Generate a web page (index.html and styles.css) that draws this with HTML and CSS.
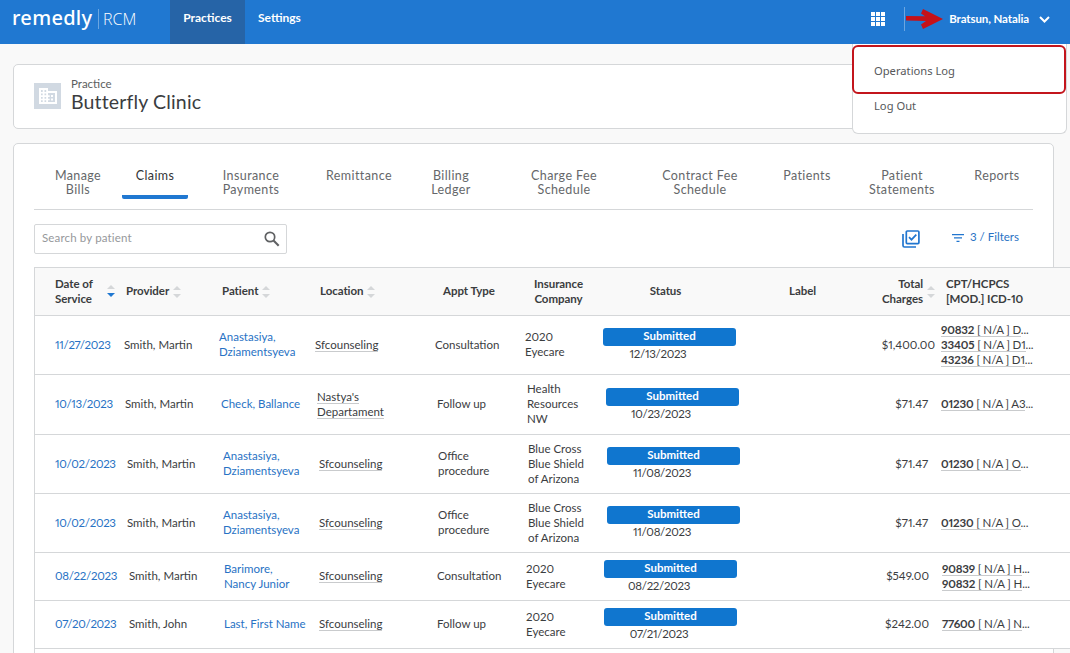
FILE: index.html
```
<!DOCTYPE html>
<html lang="en">
<head>
  <meta charset="UTF-8">
  <meta name="viewport" content="width=device-width, initial-scale=1">
  <title>Remedly RCM - Claims</title>
  <link rel="stylesheet" href="styles.css">
</head>
<body>

  <header class="topbar">
    <div class="logo"><span class="logo-name">remedly</span><span class="logo-rcm">RCM</span></div>
    <nav class="main-nav">
      <a class="nav-link active">Practices</a>
      <a class="nav-link">Settings</a>
    </nav>
    <div class="user">
      <svg class="apps" width="14" height="14" viewBox="0 0 14 14" fill="#fff">
        <path d="M0 0h4v4H0zM5 0h4v4H5zM10 0h4v4h-4zM0 5h4v4H0zM5 5h4v4H5zM10 5h4v4h-4zM0 10h4v4H0zM5 10h4v4H5zM10 10h4v4h-4z"/>
      </svg>
      <div class="divider"></div>
      <svg class="arrow" width="38" height="20" viewBox="0 0 38 20">
        <path d="M1 7 L20 7.300 L16 4.500 L18 0 L38 10 L18 20 L16 15.500 L21 12 L1 11.500 Z" fill="#c61118"/>
      </svg>
      <span class="user-name">Bratsun, Natalia</span>
      <svg class="chevron" width="11" height="7" viewBox="0 0 11 7" fill="none" stroke="#fff" stroke-width="2"><path d="M1 1l4.500 4.500L10 1"/></svg>
    </div>
    <div class="menu">
      <a class="menu-item marked">Operations Log</a>
      <a class="menu-item">Log Out</a>
    </div>
  </header>

  <section class="panel practice">
    <div class="practice-icon">
      <svg width="18" height="16" viewBox="0 0 18 16">
        <path fill="#fff" d="M0 0h9v3h9v13H0z"/>
        <path fill="#d1d9e2" d="M2 2h1.700v2H2zM5.500 2h1.700v2H5.500zM2 5.500h1.700v1.700H2zM5.500 5.500h1.700v1.700H5.500zM2 9h1.700v1.700H2zM5.500 9h1.700v1.700H5.500zM2 12.300h1.700V14H2zM5.500 12.300h1.700V14H5.500zM9 5h7v9H9v-1.700h1.700v-1.600H9V9h1.700V7.200H9z"/>
        <path fill="#fff" d="M12 7h2v2h-2zM12 10.500h2v2h-2z"/>
      </svg>
    </div>
    <div>
      <div class="practice-label">Practice</div>
      <div class="practice-name">Butterfly Clinic</div>
    </div>
  </section>

  <section class="panel main">
    <nav class="tabs">
      <a class="tab">Manage<br>Bills</a>
      <a class="tab active">Claims</a>
      <a class="tab">Insurance<br>Payments</a>
      <a class="tab">Remittance</a>
      <a class="tab">Billing<br>Ledger</a>
      <a class="tab">Charge Fee<br>Schedule</a>
      <a class="tab">Contract Fee<br>Schedule</a>
      <a class="tab">Patients</a>
      <a class="tab">Patient<br>Statements</a>
      <a class="tab">Reports</a>
    </nav>

    <div class="toolbar">
      <div class="search">
        <span>Search by patient</span>
        <svg width="16" height="16" viewBox="0 0 16 16" fill="none" stroke="#5f6163"><circle cx="6" cy="6" r="4.700" stroke-width="1.700"/><path d="M9.500 9.500l5.200 5.200" stroke-width="2.100"/></svg>
      </div>
      <div class="tools">
        <svg width="18" height="18" viewBox="0 0 18 18" fill="none" stroke="#2176cf" stroke-width="1.700">
          <rect x="4.300" y="1" width="12.600" height="12.600" rx="1"/>
          <path d="M1 4v11.500q0 1.500 1.500 1.500H14M7 7.200l2.500 2.500 4.800-5"/>
        </svg>
        <a class="filters">
          <svg width="12" height="8" viewBox="0 0 12 8" stroke="#2176cf" stroke-width="1.200"><path d="M0 .6h12M2 3.900h8M4.500 7.300h3"/></svg>
          3 / Filters
        </a>
      </div>
    </div>

    <div class="claims">
      <div class="row head">
        <div class="date-head">Date of<br>Service <svg class="sort" viewBox="0 0 8 12"><path d="M0 4l4-4 4 4z"/><path class="down" d="M0 8l4 4 4-4z"/></svg></div>
        <div>Provider <svg class="sort" viewBox="0 0 8 12"><path d="M0 4l4-4 4 4zM0 8l4 4 4-4z"/></svg></div>
        <div>Patient <svg class="sort" viewBox="0 0 8 12"><path d="M0 4l4-4 4 4zM0 8l4 4 4-4z"/></svg></div>
        <div>Location <svg class="sort" viewBox="0 0 8 12"><path d="M0 4l4-4 4 4zM0 8l4 4 4-4z"/></svg></div>
        <div>Appt Type</div>
        <div class="center">Insurance<br>Company</div>
        <div class="center">Status</div>
        <div class="center">Label</div>
        <div class="total">Total<br>Charges</div>
        <div class="sort-cell"><svg class="sort" viewBox="0 0 8 12"><path d="M0 4l4-4 4 4zM0 8l4 4 4-4z"/></svg></div>
        <div>CPT/HCPCS<br>[MOD.] ICD-10</div>
      </div>

      <div class="row claim-1">
        <div><a class="date">11/27/2023</a></div>
        <div>Smith, Martin</div>
        <div><a>Anastasiya,<br>Dziamentsyeva</a></div>
        <div><span class="hint">Sfcounseling</span></div>
        <div>Consultation</div>
        <div>2020<br>Eyecare</div>
        <div class="status"><b>Submitted</b><span class="date">12/13/2023</span></div>
        <div class="total">$1,400.00</div>
        <div class="codes">
          <div><span class="hint"><b>90832</b> [ N/A ] D</span>...</div>
          <div><span class="hint"><b>33405</b> [ N/A ] D1</span>...</div>
          <div><span class="hint"><b>43236</b> [ N/A ] D1</span>...</div>
        </div>
      </div>

      <div class="row claim-2 tall">
        <div><a class="date">10/13/2023</a></div>
        <div>Smith, Martin</div>
        <div><a>Check, Ballance</a></div>
        <div><span class="hint">Nastya's<br>Departament</span></div>
        <div>Follow up</div>
        <div>Health<br>Resources<br>NW</div>
        <div class="status"><b>Submitted</b><span class="date">10/23/2023</span></div>
        <div class="total">$71.47</div>
        <div class="codes">
          <div><span class="hint"><b>01230</b> [ N/A ] A3</span>...</div>
        </div>
      </div>

      <div class="row claim-3">
        <div><a class="date">10/02/2023</a></div>
        <div>Smith, Martin</div>
        <div><a>Anastasiya,<br>Dziamentsyeva</a></div>
        <div><span class="hint">Sfcounseling</span></div>
        <div>Office<br>procedure</div>
        <div>Blue Cross<br>Blue Shield<br>of Arizona</div>
        <div class="status"><b>Submitted</b><span class="date">11/08/2023</span></div>
        <div class="total">$71.47</div>
        <div class="codes">
          <div><span class="hint"><b>01230</b> [ N/A ] O</span>...</div>
        </div>
      </div>

      <div class="row claim-3">
        <div><a class="date">10/02/2023</a></div>
        <div>Smith, Martin</div>
        <div><a>Anastasiya,<br>Dziamentsyeva</a></div>
        <div><span class="hint">Sfcounseling</span></div>
        <div>Office<br>procedure</div>
        <div>Blue Cross<br>Blue Shield<br>of Arizona</div>
        <div class="status"><b>Submitted</b><span class="date">11/08/2023</span></div>
        <div class="total">$71.47</div>
        <div class="codes">
          <div><span class="hint"><b>01230</b> [ N/A ] O</span>...</div>
        </div>
      </div>

      <div class="row claim-4 short">
        <div><a class="date">08/22/2023</a></div>
        <div>Smith, Martin</div>
        <div><a>Barimore,<br>Nancy Junior</a></div>
        <div><span class="hint">Sfcounseling</span></div>
        <div>Consultation</div>
        <div>2020<br>Eyecare</div>
        <div class="status"><b>Submitted</b><span class="date">08/22/2023</span></div>
        <div class="total">$549.00</div>
        <div class="codes">
          <div><span class="hint"><b>90839</b> [ N/A ] H</span>...</div>
          <div><span class="hint"><b>90832</b> [ N/A ] H</span>...</div>
        </div>
      </div>

      <div class="row claim-4 short">
        <div><a class="date">07/20/2023</a></div>
        <div>Smith, John</div>
        <div><a>Last, First Name</a></div>
        <div><span class="hint">Sfcounseling</span></div>
        <div>Follow up</div>
        <div>2020<br>Eyecare</div>
        <div class="status"><b>Submitted</b><span class="date">07/21/2023</span></div>
        <div class="total">$242.00</div>
        <div class="codes">
          <div><span class="hint"><b>77600</b> [ N/A ] N</span>...</div>
        </div>
      </div>
    </div>
  </section>

</body>
</html>
```
FILE: styles.css
```
* {
  box-sizing: border-box;
}
body {
  margin: 0;
  height: 653px;
  overflow: hidden;
  background: #f9f9f9;
  color: #3b3d3f;
  font-family: Lato, "Open Sans", sans-serif;
  font-size: 11.5px;
  line-height: 15px;
}

/* top bar */
.topbar {
  position: relative;
  display: flex;
  height: 44px;
  background: #2078d1;
  color: #fff;
}
.logo {
  display: flex;
  align-items: flex-start;
  width: 170px;
  padding: 6px 0 0 12px;
  font-family: "Noto Sans", sans-serif;
}
.logo-name {
  width: 86px;
  font-size: 20px;
  font-weight: 500;
  line-height: 23px;
  letter-spacing: 0.3px;
}
.logo-rcm {
  margin-top: 3px;
  padding-left: 4px;
  border-left: 1px solid #6ba6e1;
  font-family: "Open Sans", sans-serif;
  font-weight: 300;
  font-size: 16px;
  line-height: 20px;
}
.main-nav {
  display: flex;
}
.nav-link {
  padding: 10px 13px 0;
  font-weight: bold;
  font-size: 12px;
  line-height: 16px;
}
.nav-link.active {
  width: 75px;
  padding: 10px 0 0;
  background: #2664a7;
  text-align: center;
}
.user {
  display: flex;
  align-items: center;
  height: 38px;
  margin-left: auto;
  padding-right: 20px;
  font-weight: bold;
  font-size: 11.5px;
  letter-spacing: -0.1px;
}
.user-name {
  padding-bottom: 1px;
}
.divider {
  width: 1px;
  height: 24px;
  margin-left: 19px;
  background: #6ba6e1;
}
.arrow {
  margin-right: 6px;
}
.chevron {
  margin-left: 10px;
}
.menu {
  position: absolute;
  top: 44px;
  left: 852px;
  z-index: 2;
  width: 215px;
  height: 90px;
  border: 1px solid #d5d7d9;
  border-top: 0;
  border-radius: 0 0 6px 6px;
  background: #fff;
}
.menu-item {
  display: block;
  padding-left: 21px;
  color: #56585a;
  font-family: "Noto Sans", sans-serif;
  font-size: 11.2px;
  line-height: 24px;
}
.menu-item.marked {
  height: 49px;
  margin: 1px 0 0 -1px;
  padding: 12px 0 0 20px;
  border: 2px solid #c3151c;
  border-radius: 6px;
}

/* panels */
.panel {
  width: 1041px;
  margin-left: 13px;
  border: 1px solid #d5d7d9;
  border-radius: 5px;
  background: #fff;
}
.practice {
  display: flex;
  height: 65px;
  margin-top: 20px;
  padding: 12px 20px;
}
.practice-icon {
  display: flex;
  align-items: center;
  justify-content: center;
  width: 27px;
  height: 26px;
  margin: 6px 10px 0 0;
  background: #d1d9e2;
}
.practice-label {
  color: #5c5e60;
  line-height: 14px;
}
.practice-name {
  font-size: 19.5px;
  line-height: 22px;
  letter-spacing: 0.15px;
}
.main {
  height: 540px;
  margin-top: 14px;
  padding: 0 20px;
}
.tabs {
  display: grid;
  grid-template-columns: 88px 66px 126px 90px 94px 132px 140px 74px 116px 74px;
  height: 66px;
  border-bottom: 1px solid #d5d7d9;
}
.tab {
  height: 55px;
  padding-top: 25px;
  color: #65676a;
  font-size: 12.5px;
  line-height: 14px;
  letter-spacing: 0.4px;
  text-align: center;
}
.tab.active {
  border-bottom: 4px solid #2078d1;
  border-radius: 2px;
  color: #333537;
}

/* search and filters */
.toolbar {
  display: flex;
  justify-content: space-between;
  height: 57px;
  padding-top: 14px;
}
.search {
  display: flex;
  align-items: center;
  justify-content: space-between;
  width: 253px;
  height: 30px;
  padding: 0 6px 3px 7px;
  border: 1px solid #d5d7d9;
  border-radius: 2px;
  color: #96989b;
  letter-spacing: 0.15px;
}
.search svg {
  margin-top: 3px;
}
.tools {
  display: flex;
  align-items: center;
  height: 30px;
  padding-right: 14px;
}
.filters {
  display: flex;
  align-items: center;
  gap: 6px;
  margin: -5px 0 0 32px;
}
.filters svg {
  margin-top: 3px;
}
a {
  color: #2872c4;
}
.nav-link {
  color: #fff;
}

/* claims table */
.claims {
  width: 1060px;
  height: 400px;
  border-left: 1px solid #d5d7d9;
  font-variant-numeric: proportional-nums;
}
.row {
  display: grid;
  align-items: center;
  height: 59px;
  padding: 0 0 2px 20px;
  border-bottom: 1px solid #d5d7d9;
  background: #fff;
  white-space: nowrap;
}
.tall {
  height: 60px;
}
.short {
  height: 48px;
}
.head {
  grid-template-columns: 71px 96px 98px 123px 90px 51px 163px 111px 65px 23px 120px;
  height: 49px;
  border-top: 1px solid #d5d7d9;
  background: #f9f9f9;
  font-weight: bold;
  letter-spacing: -0.05px;
}
.claim-1 {
  grid-template-columns: 69px 95px 96px 120px 90px 78px 133px 199px 120px;
}
.claim-2 {
  grid-template-columns: 70px 96px 96px 120px 90px 79px 133px 189px 120px;
}
.claim-3 {
  grid-template-columns: 72px 96px 96px 119px 90px 79px 133px 188px 120px;
}
.claim-4 {
  grid-template-columns: 74px 95px 95px 118px 89px 78px 133px 192px 120px;
}
.sort {
  width: 8px;
  height: 12px;
  margin-left: 1px;
  vertical-align: -3px;
  fill: #d5d7d9;
}
.date-head {
  position: relative;
}
.date-head .sort {
  position: absolute;
  top: 9px;
  left: 51px;
}
.sort .down {
  fill: #2078d1;
}
.sort-cell {
  padding-left: 3px;
}
.center {
  text-align: center;
}
.date {
  letter-spacing: -0.3px;
}
.total {
  text-align: right;
}
.codes {
  padding-left: 13px;
  letter-spacing: -0.15px;
}
.claim-1 .codes {
  padding-left: 6px;
}
.hint {
  border-bottom: 1px solid #c9cbcd;
}
.status b {
  display: block;
  height: 18px;
  margin-top: 1px;
  border-radius: 3px;
  background: #1076cf;
  color: #fff;
  text-align: center;
}
.status span {
  display: block;
  padding-right: 23px;
  text-align: center;
}
```
